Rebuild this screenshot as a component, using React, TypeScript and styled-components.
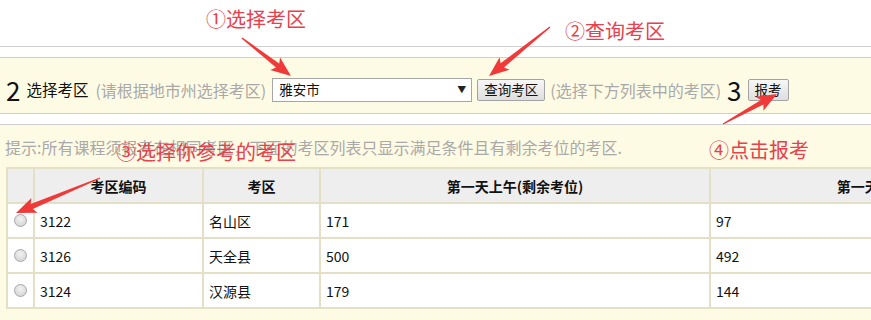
import React from 'react'
import styled, { createGlobalStyle } from 'styled-components'

const FONT = `"Noto Sans CJK SC", "Noto Sans", sans-serif`
const PANEL_BG = '#fefbe4'
const LINE = '#cfcfcf'
const CELL_LINE = '#e4e0c6'
const MUTED = '#a9a9a9'
const RED = '#f03a3a'
const LABEL_RED = '#e8404c'

const GlobalStyle = createGlobalStyle`
  html, body {
    margin: 0;
    padding: 0;
    background: #fff;
    overflow: hidden;
  }
  body {
    font-family: ${FONT};
    color: #111;
  }
`

interface Room {
  code: string
  name: string
  am: string
  pm: string
}

const rooms: Room[] = [
  { code: '3122', name: '名山区', am: '171', pm: '97' },
  { code: '3126', name: '天全县', am: '500', pm: '492' },
  { code: '3124', name: '汉源县', am: '179', pm: '144' },
]

interface ArrowProps {
  from: [number, number]
  to: [number, number]
}

// tapered arrow: thin tail, fat shaft near the head, notched triangle head
const Arrow: React.FC<ArrowProps> = ({ from, to }) => {
  const [x1, y1] = from
  const [x2, y2] = to
  const len = Math.hypot(x2 - x1, y2 - y1)
  const dx = (x2 - x1) / len
  const dy = (y2 - y1) / len
  const nx = -dy
  const ny = dx
  const head = 17
  const bx = x2 - dx * head
  const by = y2 - dy * head
  const p = (x: number, y: number) => `${x.toFixed(1)},${y.toFixed(1)}`
  const pts = [
    p(x1 + nx * 0.6, y1 + ny * 0.6),
    p(bx + nx * 2.6, by + ny * 2.6),
    p(bx - dx * 3 + nx * 8, by - dy * 3 + ny * 8),
    p(x2, y2),
    p(bx - dx * 3 - nx * 8, by - dy * 3 - ny * 8),
    p(bx - nx * 2.6, by - ny * 2.6),
    p(x1 - nx * 0.6, y1 - ny * 0.6),
  ]
  return <polygon points={pts.join(' ')} fill={RED} />
}

export default function App() {
  return (
    <S.Page>
      <GlobalStyle />
      <S.TopStrip />

      <S.Panel>
        <S.StepRow>
          <S.StepNo>2</S.StepNo>
          <S.Label>选择考区</S.Label>
          <S.Muted>(请根据地市州选择考区)</S.Muted>
          <S.SelectBox>
            <span>雅安市</span>
            <S.Caret>▼</S.Caret>
          </S.SelectBox>
          <S.Button>查询考区</S.Button>
          <S.Muted>(选择下方列表中的考区)</S.Muted>
          <S.StepNo>3</S.StepNo>
          <S.Button>报考</S.Button>
        </S.StepRow>
      </S.Panel>

      <S.Panel $grow>
        <S.Hint>提示:所有课程须报考在相同考区，下面的考区列表只显示满足条件且有剩余考位的考区.</S.Hint>
        <S.Table>
          <colgroup>
            <col style={{ width: 27 }} />
            <col style={{ width: 169 }} />
            <col style={{ width: 117 }} />
            <col style={{ width: 390 }} />
            <col style={{ width: 390 }} />
          </colgroup>
          <thead>
            <tr>
              <S.Th />
              <S.Th>考区编码</S.Th>
              <S.Th>考区</S.Th>
              <S.Th>第一天上午(剩余考位)</S.Th>
              <S.Th>第一天下午(剩余考位)</S.Th>
            </tr>
          </thead>
          <tbody>
            {rooms.map((r) => (
              <tr key={r.code}>
                <S.Td $center>
                  <S.Radio />
                </S.Td>
                <S.Td>{r.code}</S.Td>
                <S.Td>{r.name}</S.Td>
                <S.Td>{r.am}</S.Td>
                <S.Td>{r.pm}</S.Td>
              </tr>
            ))}
          </tbody>
        </S.Table>
      </S.Panel>

      <S.Overlay width="871" height="320">
        <Arrow from={[242, 38]} to={[291, 76]} />
        <Arrow from={[550, 27]} to={[489, 76]} />
        <Arrow from={[100, 178]} to={[16, 213]} />
        <Arrow from={[723, 124]} to={[777, 94]} />
      </S.Overlay>
      <S.Note $x={206} $y={6}>①选择考区</S.Note>
      <S.Note $x={565} $y={18}>②查询考区</S.Note>
      <S.Note $x={116} $y={139}>③选择你参考的考区</S.Note>
      <S.Note $x={709} $y={137}>④点击报考</S.Note>
    </S.Page>
  )
}

const S = {
  Page: styled.div`
    position: relative;
    width: 871px;
    height: 320px;
    overflow: hidden;
  `,
  TopStrip: styled.div`
    height: 46px;
    border-bottom: 1px solid ${LINE};
  `,
  Panel: styled.div<{ $grow?: boolean }>`
    margin-top: 10px;
    background: ${PANEL_BG};
    border-top: 1px solid ${LINE};
    border-bottom: 1px solid ${LINE};
    padding: ${(p) => (p.$grow ? '12px 0 11px 6px' : '0 0 0 6px')};
  `,
  StepRow: styled.div`
    display: flex;
    align-items: center;
    height: 55px;
    white-space: nowrap;
    padding-top: 8px;
    box-sizing: border-box;
  `,
  StepNo: styled.span`
    font-size: 26px;
    line-height: 1;
    margin-right: 6px;
  `,
  Label: styled.span`
    font-size: 15.5px;
    line-height: 1;
    margin-right: 7px;
  `,
  Muted: styled.span`
    font-size: 16px;
    line-height: 1;
    color: ${MUTED};
    margin-right: 6px;
  `,
  SelectBox: styled.div`
    display: flex;
    align-items: center;
    justify-content: space-between;
    box-sizing: border-box;
    width: 200px;
    height: 24px;
    padding: 0 5px 0 6px;
    margin-right: 5px;
    background: #fff;
    border: 1px solid #a6a6a6;
    font-size: 13.5px;
    line-height: 1;
  `,
  Caret: styled.span`
    font-size: 9px;
    color: #222;
  `,
  Button: styled.button`
    box-sizing: border-box;
    height: 22px;
    padding: 0 6px;
    margin-right: 5px;
    font-family: ${FONT};
    font-size: 13.5px;
    line-height: 1;
    color: #111;
    border: 1px solid #a3a3a3;
    border-radius: 2px;
    background: linear-gradient(#f7f7f7, #dedede);
  `,
  Hint: styled.div`
    font-size: 16px;
    line-height: 20px;
    color: ${MUTED};
    white-space: nowrap;
    margin-bottom: 10px;
    margin-left: -1px;
  `,
  Table: styled.table`
    border-collapse: collapse;
    table-layout: fixed;
    width: 1093px;
    background: #fff;
    border: 2px solid ${CELL_LINE};
  `,
  Th: styled.th`
    height: 33px;
    padding: 0;
    background: #eeeeee;
    border: 2px solid ${CELL_LINE};
    font-size: 14px;
    font-weight: bold;
    text-align: center;
  `,
  Td: styled.td<{ $center?: boolean }>`
    height: 33px;
    padding: 0 ${(p) => (p.$center ? '0' : '5px')};
    border: 2px solid ${CELL_LINE};
    font-size: 14px;
    text-align: ${(p) => (p.$center ? 'center' : 'left')};
  `,
  Radio: styled.span`
    display: inline-block;
    width: 11px;
    height: 11px;
    margin-top: 4px;
    border-radius: 50%;
    border: 1px solid #a9a9a9;
    background: radial-gradient(circle at 50% 35%, #f2f2f2, #cfcfcf);
  `,
  Overlay: styled.svg`
    position: absolute;
    left: 0;
    top: 0;
    pointer-events: none;
  `,
  Note: styled.div<{ $x: number; $y: number }>`
    position: absolute;
    left: ${(p) => p.$x}px;
    top: ${(p) => p.$y}px;
    font-size: 20px;
    line-height: 26px;
    color: ${LABEL_RED};
    white-space: nowrap;
  `,
}
